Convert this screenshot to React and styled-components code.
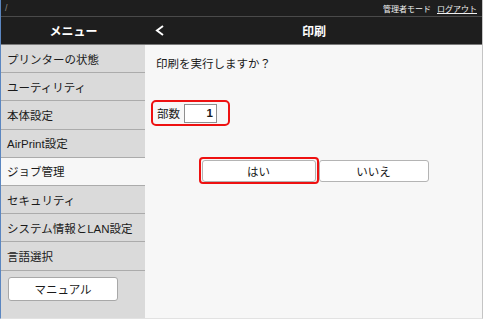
import React from "react";
import styled, { createGlobalStyle } from "styled-components";

const Global = createGlobalStyle`
  html, body { margin: 0; padding: 0; background: #f7f7f7; }
  body { font-family: "Liberation Sans", "Noto Sans CJK JP", sans-serif; }
  * { box-sizing: border-box; }
`;

const Frame = styled.div`
  width: 483px;
  height: 319px;
  display: flex;
  flex-direction: column;
  border-left: 1px solid #5b86c0;
  border-right: 1px solid #c4c4c4;
  border-bottom: 1px solid #e2e2e2;
  background: #f7f7f7;
  overflow: hidden;
`;

const TopBar = styled.div`
  height: 17px;
  flex: none;
  background: #1e1e1e;
  border-bottom: 1px solid #4a4a4a;
  display: flex;
  align-items: center;
  justify-content: space-between;
  padding: 0 5px 0 4px;
  color: #f0f0f0;
  font-size: 8px;
`;

const Slash = styled.span`
  color: #8a8a8a;
  font-size: 9px;
`;

const AdminInfo = styled.div`
  display: flex;
  gap: 6px;
  align-items: center;
`;

const Logout = styled.span`
  text-decoration: underline;
`;

const Header = styled.div`
  height: 28px;
  flex: none;
  background: #1e1e1e;
  border-bottom: 1px solid #7a7a7a;
  display: flex;
  align-items: center;
  color: #ffffff;
  font-weight: bold;
  font-size: 12px;
`;

const HeaderMenu = styled.div`
  width: 145px;
  text-align: center;
`;

const HeaderMain = styled.div`
  flex: 1;
  display: flex;
  align-items: center;
  position: relative;
  height: 100%;
  justify-content: center;
`;

const BackIcon = styled.svg`
  position: absolute;
  left: 9px;
  top: 8px;
`;

const Body = styled.div`
  flex: 1;
  display: flex;
  min-height: 0;
`;

const Sidebar = styled.div`
  width: 144px;
  flex: none;
  background: #dadada;
  display: flex;
  flex-direction: column;
`;

const NavItem = styled.div`
  height: 28.2px;
  flex: none;
  display: flex;
  align-items: center;
  padding-left: 6px;
  font-size: 11.5px;
  color: #1a1a1a;
  border-bottom: 1px solid #ababab;
  background: ${(p) => (p.$active ? "#f7f7f7" : "transparent")};
  white-space: nowrap;
`;

const ManualButton = styled.button`
  margin: 6px 0 0 7px;
  width: 110px;
  height: 24px;
  background: #ffffff;
  border: 1px solid #a8a8a8;
  border-radius: 3px;
  font-family: inherit;
  font-size: 11.5px;
  color: #1a1a1a;
  padding: 0;
`;

const Main = styled.div`
  flex: 1;
  padding: 11px 0 0 6px;
  display: flex;
  flex-direction: column;
  background: #f7f7f7;
`;

const Question = styled.div`
  margin-left: 5px;
  font-size: 11.5px;
  line-height: 16px;
  color: #1a1a1a;
`;

const CopiesBox = styled.div`
  margin-top: 28px;
  width: 79px;
  height: 26px;
  border: 2px solid #ee1111;
  border-radius: 5px;
  display: flex;
  align-items: center;
  gap: 4px;
  padding-left: 4px;
  font-size: 11.5px;
  color: #1a1a1a;
`;

const CountInput = styled.div`
  width: 33px;
  height: 19px;
  background: #ffffff;
  border: 1px solid #8f8f8f;
  display: flex;
  align-items: center;
  justify-content: flex-end;
  padding-right: 3px;
  font-weight: bold;
  font-size: 11.5px;
  color: #1a1a1a;
`;

const ButtonRow = styled.div`
  margin-top: 31px;
  display: flex;
  justify-content: center;
  align-items: center;
  margin-left: -6px;
`;

const Highlight = styled.div`
  border: 2px solid #ee1111;
  border-radius: 4px;
  padding: 0 1px;
  height: 27px;
  display: flex;
  align-items: center;
`;

const DialogButton = styled.button`
  width: ${(p) => p.$w}px;
  height: 22px;
  background: #ffffff;
  border: 1px solid #b4b4b4;
  border-radius: 3px;
  font-family: inherit;
  font-size: 11.5px;
  color: #1a1a1a;
  padding: 0;
`;

const items = [
  "プリンターの状態",
  "ユーティリティ",
  "本体設定",
  "AirPrint設定",
  "ジョブ管理",
  "セキュリティ",
  "システム情報とLAN設定",
  "言語選択",
];

export default function App() {
  return (
    <>
      <Global />
      <Frame>
        <TopBar>
          <Slash>/</Slash>
          <AdminInfo>
            <span>管理者モード</span>
            <Logout>ログアウト</Logout>
          </AdminInfo>
        </TopBar>
        <Header>
          <HeaderMenu>メニュー</HeaderMenu>
          <HeaderMain>
            <BackIcon width="10" height="11" viewBox="0 0 10 11">
              <polyline
                points="8,1 2,5.5 8,10"
                fill="none"
                stroke="#ffffff"
                strokeWidth="2"
              />
            </BackIcon>
            印刷
          </HeaderMain>
        </Header>
        <Body>
          <Sidebar>
            {items.map((t) => (
              <NavItem key={t} $active={t === "ジョブ管理"}>
                {t}
              </NavItem>
            ))}
            <ManualButton>マニュアル</ManualButton>
          </Sidebar>
          <Main>
            <Question>印刷を実行しますか？</Question>
            <CopiesBox>
              <span>部数</span>
              <CountInput>1</CountInput>
            </CopiesBox>
            <ButtonRow>
              <Highlight>
                <DialogButton $w={114}>はい</DialogButton>
              </Highlight>
              <DialogButton $w={110}>いいえ</DialogButton>
            </ButtonRow>
          </Main>
        </Body>
      </Frame>
    </>
  );
}
